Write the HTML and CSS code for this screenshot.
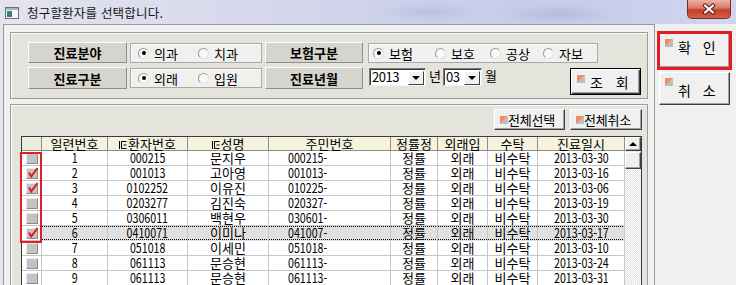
FILE: index.html
```html
<!DOCTYPE html>
<html lang="ko">
<head>
<meta charset="utf-8">
<title>청구할환자 선택</title>
<link rel="stylesheet" href="styles.css">
</head>
<body>
<div class="titlebar">
  <svg class="appicon" width="14" height="12" viewBox="0 0 14 12"><rect x="0.5" y="0.5" width="13" height="11" fill="#f6f6f6" stroke="#707070"/><rect x="1" y="1" width="12" height="2" fill="#a9b2c6"/><rect x="2" y="4" width="3" height="6" fill="#2f8f4e"/><rect x="5" y="4" width="2" height="6" fill="#3b6fc4"/></svg>
  <span class="title">청구할환자를 선택합니다.</span>
  <div class="close"><svg width="16" height="12" viewBox="0 0 16 12"><path d="M4 2.5L12 9.5M12 2.5L4 9.5" stroke="#5a1f16" stroke-width="4.2" stroke-linecap="round"/><path d="M4 2.5L12 9.5M12 2.5L4 9.5" stroke="#fff" stroke-width="2.2" stroke-linecap="round"/></svg></div>
</div>
<div class="client">
  <div class="main">
    <div class="panel search">
      <div class="row">
        <div class="lbl">진료분야</div>
        <div class="rbox rb1">
          <span class="opt w60"><span class="radio on"></span>의과</span>
          <span class="opt"><span class="radio"></span>치과</span>
        </div>
        <div class="lbl lbl2">보험구분</div>
        <div class="rbox rb2">
          <span class="opt w62"><span class="radio on"></span>보험</span>
          <span class="opt w55"><span class="radio"></span>보호</span>
          <span class="opt w53"><span class="radio"></span>공상</span>
          <span class="opt"><span class="radio"></span>자보</span>
        </div>
      </div>
      <div class="row row2">
        <div class="lbl">진료구분</div>
        <div class="rbox rb1">
          <span class="opt w60"><span class="radio on"></span>외래</span>
          <span class="opt"><span class="radio"></span>입원</span>
        </div>
        <div class="lbl lbl2">진료년월</div>
        <div class="sel sel-y"><span class="val">2013</span><span class="drop"><i class="tri"></i></span></div>
        <span class="unit">년</span>
        <div class="sel sel-m"><span class="val">03</span><span class="drop"><i class="tri"></i></span></div>
        <span class="unit">월</span>
        <button class="btn btn-query"><i class="ico"></i><span>조 회</span></button>
      </div>
    </div>
    <div class="panel list">
      <div class="tools">
        <button class="btn btn-small"><i class="ico"></i>전체선택</button>
        <button class="btn btn-small"><i class="ico"></i>전체취소</button>
      </div>
      <div class="grid">
        <table class="tbl">
          <colgroup>
            <col class="c0"><col class="c1"><col class="c2"><col class="c3"><col class="c4"><col class="c5"><col class="c6"><col class="c7"><col class="c8">
          </colgroup>
          <thead>
            <tr>
              <th></th>
              <th>일련번호</th>
              <th><svg class="sorti" width="8" height="10" viewBox="0 0 8 10"><path d="M0.5 1v8M2.5 1.5h5M2.5 1.5v7h5M4.5 5h3" stroke="#000" fill="none"/></svg>환자번호</th>
              <th><svg class="sorti" width="8" height="10" viewBox="0 0 8 10"><path d="M0.5 1v8M2.5 1.5h5M2.5 1.5v7h5M4.5 5h3" stroke="#000" fill="none"/></svg>성명</th>
              <th>주민번호</th>
              <th>정률정</th>
              <th>외래입</th>
              <th>수탁</th>
              <th>진료일시</th>
            </tr>
          </thead>
          <tbody>
            <tr><td class="cb"><span class="chk"></span></td><td><span class="n">1</span></td><td><span class="n">000215</span></td><td>문지우</td><td class="jm"><span class="n">000215-</span></td><td>정률</td><td>외래</td><td>비수탁</td><td><span class="n">2013-03-30</span></td></tr>
            <tr><td class="cb"><span class="chk"><svg width="12" height="11" viewBox="0 0 12 11"><path d="M2 5.5L4.2 9.5L10.5 1" stroke="#e01a1a" stroke-width="2" fill="none"/></svg></span></td><td><span class="n">2</span></td><td><span class="n">001013</span></td><td>고아영</td><td class="jm"><span class="n">001013-</span></td><td>정률</td><td>외래</td><td>비수탁</td><td><span class="n">2013-03-16</span></td></tr>
            <tr><td class="cb"><span class="chk"><svg width="12" height="11" viewBox="0 0 12 11"><path d="M2 5.5L4.2 9.5L10.5 1" stroke="#e01a1a" stroke-width="2" fill="none"/></svg></span></td><td><span class="n">3</span></td><td><span class="n">0102252</span></td><td>이유진</td><td class="jm"><span class="n">010225-</span></td><td>정률</td><td>외래</td><td>비수탁</td><td><span class="n">2013-03-06</span></td></tr>
            <tr><td class="cb"><span class="chk"></span></td><td><span class="n">4</span></td><td><span class="n">0203277</span></td><td>김진숙</td><td class="jm"><span class="n">020327-</span></td><td>정률</td><td>외래</td><td>비수탁</td><td><span class="n">2013-03-19</span></td></tr>
            <tr><td class="cb"><span class="chk"></span></td><td><span class="n">5</span></td><td><span class="n">0306011</span></td><td>백현우</td><td class="jm"><span class="n">030601-</span></td><td>정률</td><td>외래</td><td>비수탁</td><td><span class="n">2013-03-30</span></td></tr>
            <tr class="sel-row"><td class="cb"><span class="chk"><svg width="12" height="11" viewBox="0 0 12 11"><path d="M2 5.5L4.2 9.5L10.5 1" stroke="#e01a1a" stroke-width="2" fill="none"/></svg></span></td><td><span class="n">6</span></td><td><span class="n">0410071</span></td><td>이미나</td><td class="jm"><span class="n">041007-</span></td><td>정률</td><td>외래</td><td>비수탁</td><td><span class="n">2013-03-17</span></td></tr>
            <tr><td class="cb"><span class="chk"></span></td><td><span class="n">7</span></td><td><span class="n">051018</span></td><td>이세민</td><td class="jm"><span class="n">051018-</span></td><td>정률</td><td>외래</td><td>비수탁</td><td><span class="n">2013-03-10</span></td></tr>
            <tr><td class="cb"><span class="chk"></span></td><td><span class="n">8</span></td><td><span class="n">061113</span></td><td>문승현</td><td class="jm"><span class="n">061113-</span></td><td>정률</td><td>외래</td><td>비수탁</td><td><span class="n">2013-03-24</span></td></tr>
            <tr><td class="cb"><span class="chk"></span></td><td><span class="n">9</span></td><td><span class="n">061113</span></td><td>문승현</td><td class="jm"><span class="n">061113-</span></td><td>정률</td><td>외래</td><td>비수탁</td><td><span class="n">2013-03-31</span></td></tr>
          </tbody>
        </table>
        <div class="vscroll">
          <div class="sb-up"><i class="tri-up"></i></div>
          <div class="sb-thumb"></div>
        </div>
        <div class="mark"></div>
      </div>
    </div>
  </div>
  <div class="side">
    <button class="btn btn-big btn-ok"><i class="ico"></i><span>확 인</span></button>
    <button class="btn btn-big btn-cancel"><i class="ico"></i><span>취 소</span></button>
  </div>
</div>
</body>
</html>
```

FILE: styles.css
```css
* { box-sizing: border-box; margin: 0; padding: 0; }
html, body { width: 736px; height: 285px; overflow: hidden; }
body {
  font-family: "Noto Sans CJK KR", "Noto Sans", sans-serif;
  font-size: 12px;
  color: #000;
  background:
    radial-gradient(ellipse 60px 10px at 560px 14px, rgba(150,155,200,0.35), transparent),
    radial-gradient(ellipse 50px 9px at 430px 12px, rgba(150,155,200,0.3), transparent),
    linear-gradient(90deg, #e3e4ef 0%, #d8d9ec 30%, #cdd0ea 55%, #c8cbe9 75%, #d2d5ef 100%);
}

/* title bar */
.titlebar { height: 24px; display: flex; align-items: center; padding-left: 5px; position: relative; }
.appicon { margin-top: 1px; }
.title { margin-left: 8px; font-size: 12.5px; letter-spacing: 0.2px; color: #151515; }
.close {
  position: absolute; left: 687px; top: 0; width: 44px; height: 19px;
  border: 1px solid #7a2c22; border-top: none; border-radius: 0 0 5px 5px;
  background: linear-gradient(#ebb4a8 0%, #da7663 45%, #c43e28 55%, #d6604a 100%);
  display: flex; align-items: center; justify-content: center;
}

/* client */
.client { margin-left: 3px; height: 261px; background: #f0f0f0; display: flex; overflow: hidden; }
.main {
  width: 652px; height: 261px; flex: none;
  border: 1px solid #9a9a9a; border-bottom: none;
  padding: 7px 6px 0 6px; overflow: hidden;
}
.panel {
  background: #e4e3dc;
  border: 1px solid #9c9c9c;
  box-shadow: inset 1px 1px 0 #fbfbfb;
}
.search { height: 67px; padding: 9px 0 0 17px; margin-bottom: 5px; }
.row { display: flex; align-items: flex-start; height: 21px; }
.row2 { margin-top: 4px; height: 22px; }

.lbl {
  width: 99px; height: 21px; flex: none;
  background: #d6d5cd;
  border: 1px solid; border-color: #fdfdfd #8e8e8e #8e8e8e #fdfdfd;
  font-weight: bold; font-size: 13px;
  display: flex; align-items: center; justify-content: center;
}
.row2 .lbl { height: 22px; }
.lbl2 { margin-left: 3px; width: 98px; }

.rbox {
  margin-left: 3px; margin-top: 1px; height: 20px; flex: none;
  background: #f0f0ee;
  border: 1px solid #a8a8a8;
  box-shadow: inset 1px 1px 0 #fff;
  display: flex; align-items: center;
}
.rb1 { width: 132px; padding-left: 7px; }
.rb2 { width: 230px; margin-left: 5px; padding-left: 4px; }
.opt { display: flex; align-items: center; font-size: 13px; flex: none; }
.w60 { width: 60px; }
.w62 { width: 62px; }
.w55 { width: 55px; }
.w53 { width: 53px; }
.radio {
  width: 11px; height: 11px; border-radius: 50%;
  border: 1px solid; border-color: #9a9a9a #e0e0e0 #e0e0e0 #9a9a9a;
  background: #f8f8f8; margin-right: 5px; position: relative; flex: none;
}
.radio.on::after {
  content: ""; position: absolute; left: 2.5px; top: 2.5px;
  width: 4px; height: 4px; border-radius: 50%; background: #000;
}

.sel {
  height: 18px; margin-top: 1px; flex: none;
  background: #fff;
  border: 1px solid; border-color: #7a7a7a #f4f4f4 #f4f4f4 #7a7a7a;
  box-shadow: inset 1px 1px 0 #404040;
  display: flex; align-items: center; justify-content: space-between;
  font-size: 13px;
}
.sel-y { width: 57px; margin-left: 6px; }
.sel-m { width: 39px; margin-left: 2px; }
.sel .val { padding-left: 2px; line-height: 14px; letter-spacing: -0.5px; }
.drop {
  width: 16px; height: 14px; margin: 1px 1px 0 0;
  background: #f0f0f0;
  border: 1px solid; border-color: #fff #404040 #404040 #fff;
  display: flex; align-items: center; justify-content: center;
}
.tri { width: 0; height: 0; border-left: 4px solid transparent; border-right: 4px solid transparent; border-top: 4px solid #000; }
.unit { font-size: 13px; margin-left: 3px; line-height: 18px; }

/* buttons */
.btn {
  font-family: inherit; color: #000; cursor: default;
  background: #f0f0f0;
  border: 1px solid; border-color: #fff #404040 #404040 #fff;
  box-shadow: inset -1px -1px 0 #a0a0a0;
  position: relative; flex: none;
}
.ico {
  display: block; width: 8px; height: 8px;
  background: linear-gradient(135deg, #f58d55 50%, #bdbdbd 50%);
}
.btn-query {
  width: 71px; height: 27px; margin-left: auto; margin-right: 6px; margin-top: 1px;
  border: 1px solid #000;
  box-shadow: inset 1px 1px 0 #fff, inset -1px -1px 0 #404040, inset -2px -2px 0 #a0a0a0;
  font-size: 14px; word-spacing: 9px; text-align: left; padding-left: 19px;
}
.btn-query .ico { position: absolute; left: 6px; top: 6px; }

.list { height: 190px; padding: 4px 6px 0 10px; }
.tools { display: flex; justify-content: flex-end; gap: 5px; height: 21px; margin-right: -1px; }
.btn-small {
  width: 71px; height: 21px; font-size: 13px;
  display: flex; align-items: center; padding-left: 5px; letter-spacing: -0.2px;
}
.btn-small + .btn-small { width: 72px; }

/* grid */
.grid {
  margin-top: 6px; position: relative; display: flex; width: 621px; height: 160px;
  border-top: 1px solid #3a3a3a; border-left: 1px solid #3a3a3a;
}
.tbl { border-collapse: separate; border-spacing: 0; table-layout: fixed; width: 603px; flex: none; align-self: flex-start; }
.c0 { width: 20px; } .c1 { width: 66px; } .c2 { width: 80px; } .c3 { width: 81px; }
.c4 { width: 122px; } .c5 { width: 47px; } .c6 { width: 50px; } .c7 { width: 50px; } .c8 { width: 87px; }
.tbl th {
  height: 14px; padding: 0; background: #f5f3dd;
  border-right: 1px solid #8c8c8c; border-bottom: 1px solid #8c8c8c;
  font-weight: normal; font-size: 13px; line-height: 13px;
  white-space: nowrap; text-align: center; vertical-align: middle;
}
.tbl th:first-child { background: #ecebe0; }
.sorti { vertical-align: -1px; margin-right: 1px; }
.tbl td {
  height: 15px; padding: 0; background: #fff;
  border-right: 1px solid #c6c6c6; border-bottom: 1px solid #c6c6c6;
  font-size: 13px; line-height: 14px; text-align: center; vertical-align: middle;
  white-space: nowrap;
}
.n { display: inline-block; font-size: 13px; transform: scaleX(0.82); }
.tbl td.jm { text-align: left; padding-left: 19px; }
.tbl td.jm .n { transform-origin: left center; }
.tbl td.cb { line-height: 0; }
.chk {
  display: inline-block; width: 12px; height: 11px; position: relative;
  background: #c3c3c3;
  border: 1px solid; border-color: #ececec #8a8a8a #8a8a8a #ececec;
}
.chk svg { position: absolute; left: 0; top: -2px; }
.sel-row td:not(.cb) {
  background:
    repeating-linear-gradient(90deg, #000 0 1px, transparent 1px 2px) top / 100% 1px no-repeat,
    repeating-linear-gradient(90deg, #000 0 1px, transparent 1px 2px) bottom / 100% 1px no-repeat,
    #e0e0e0;
  border-bottom-color: transparent;
}

.vscroll {
  width: 17px; flex: none; border-right: 1px solid #3a3a3a;
  background: repeating-conic-gradient(#e4e4e4 0 25%, #fbfbfb 0 50%) 0 0 / 2px 2px;
  display: flex; flex-direction: column;
}
.sb-up, .sb-thumb {
  background: #f0f0f0;
  border: 1px solid; border-color: #fff #404040 #404040 #fff;
  box-shadow: inset -1px -1px 0 #a0a0a0;
}
.sb-up { height: 14px; display: flex; align-items: center; justify-content: center; }
.tri-up { width: 0; height: 0; border-left: 4px solid transparent; border-right: 4px solid transparent; border-bottom: 4px solid #000; }
.sb-thumb { height: 17px; margin-top: 1px; }

.mark {
  position: absolute; left: -2px; top: 15px; width: 22px; height: 91px;
  border: 2px solid #e41c23;
}

/* side buttons */
.side { margin-left: 4px; padding-top: 9px; display: flex; flex-direction: column; }
.btn-big {
  width: 71px; font-size: 14px; word-spacing: 8px;
  text-align: left; padding-left: 18px;
}
.btn-big .ico { position: absolute; left: 5px; top: 5px; }
.btn-ok { height: 35px; padding-top: 0; padding-bottom: 8px; outline: 3px solid #e41c23; outline-offset: -1px; }
.btn-cancel { height: 33px; margin-top: 4px; padding-top: 2px; }
```
